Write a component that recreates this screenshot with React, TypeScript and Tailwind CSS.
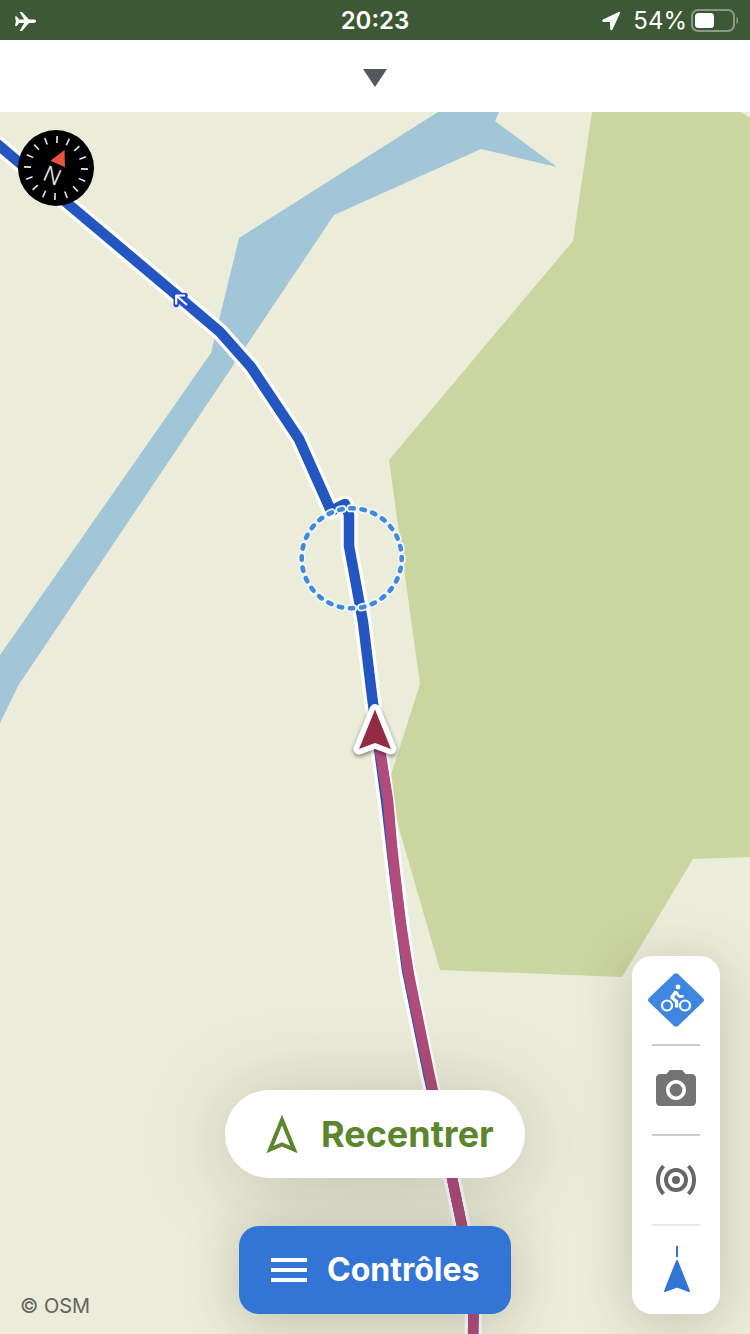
import React from "react";
import { MdCameraAlt } from "react-icons/md";

const route =
  "M-10 138L67 203L180 298L220 332L251 367L299 439L331 511L345 504L349 515L349 546L363 622L372 696L386 800L394 870L401 925L407 970L428 1073L452 1178L462 1226L474 1290L473 1340";
const track =
  "M375 711L380 750L388 800L392 846L398 900L401 925L409 975L429 1073L452 1178L462 1226L474 1290L473 1340";
const ticks = Array.from({ length: 16 }, (_, i) => i * 22.5 + 2);

function MapCanvas() {
  return (
    <svg
      className="absolute inset-0 h-full w-full"
      viewBox="0 112 750 1222"
      preserveAspectRatio="xMidYMid slice"
      aria-hidden="true"
    >
      <rect x="-1000" y="-1000" width="3000" height="4000" fill="#ebecda" />
      <path
        fill="#a2c6d8"
        d="M438 112H499L495 121L557 167L481 149L334 215L18 686L0 723V655L211 353L239 238Z"
      />
      <path
        fill="#cbd59f"
        d="M592 112L573 241L389 460L420 684L390 778L398 825L440 970L622 977L693 859L750 857V118L741 112Z"
      />
      <g fill="none" strokeLinejoin="round">
        <path d={route} stroke="#fff" strokeWidth="17" />
        <path d={route} stroke="#2356c0" strokeWidth="10.5" />
        <path d={track} stroke="#b04b7b" strokeWidth="10.5" />
      </g>

      {/* direction arrow on the route */}
      <g fill="none" strokeLinejoin="round">
        <path
          d="M185 295.500H176.200V304.500M176.200 295.500L187 305"
          stroke="#2448e0"
          strokeWidth="5.500"
          strokeLinecap="round"
        />
        <path d="M185 295.500H176.200V304.500M176.200 295.500L187 305" stroke="#fff" strokeWidth="2.200" />
      </g>

      {/* accuracy circle */}
      <g fill="none" strokeLinecap="round" strokeDasharray="3.4 7.82" strokeDashoffset="1.7">
        <circle cx="351.700" cy="558.300" r="50" stroke="#eef6fa" strokeWidth="8" />
        <circle cx="351.700" cy="558.300" r="50" stroke="#4488d8" strokeWidth="4.600" />
      </g>

      {/* current position */}
      <g style={{ filter: "drop-shadow(0 2px 2px rgba(0,0,0,0.45))" }}>
        <path
          d="M375 709.500L391 749L375 743L359 749Z"
          fill="#fff"
          stroke="#fff"
          strokeWidth="11"
          strokeLinejoin="round"
        />
      </g>
      <path d="M375 709.500L391 749L375 743L359 749Z" fill="#922c42" />
    </svg>
  );
}

function StatusBar() {
  return (
    <header className="grid h-10 grid-cols-3 items-center bg-[#3c5834] px-3 pt-0.5 text-2xl text-white">
      <svg width="24" height="22" viewBox="12 9 24 22" fill="currentColor" aria-label="Mode avion">
        <path d="M15 15.500h1.800L19.200 18.600h5L19.600 11h2.400L29 18.600h4.400c1.800 0 2.900.8 2.900 1.700s-1.100 1.700-2.900 1.700H29L22 30h-2.400l4.600-8h-5L16.800 25H15l.9-4.700z" />
      </svg>
      <span className="text-center font-semibold">20:23</span>
      <div className="flex items-center justify-end">
        <svg className="mr-3" width="20" height="20" viewBox="0 0 20 20" fill="currentColor" aria-hidden="true">
          <path d="M17.600 1L2 8.500C.6 9.200.9 10.900 2.400 10.900L9 11.100 9.200 17.800C9.200 19.400 11 19.600 11.600 18.200L18.900 2.400C19.400 1.200 18.700.5 17.600 1z" />
        </svg>
        <span>54%</span>
        <svg className="ml-1" width="47" height="24" viewBox="0 0 47 24" aria-label="Batterie">
          <rect x="1" y="1" width="42" height="21" rx="6" fill="none" stroke="#fff" strokeOpacity=".4" strokeWidth="2" />
          <rect x="4" y="4" width="19" height="15" rx="3.500" fill="#fff" />
          <path d="M45.500 8c1 .4 1.500 1.800 1.500 3.500s-.5 3.100-1.500 3.500z" fill="#fff" fillOpacity=".45" />
        </svg>
      </div>
    </header>
  );
}

function Compass() {
  return (
    <button aria-label="Boussole" className="size-[76px] rounded-full bg-black">
      <svg width="76" height="76" viewBox="-38 -38 76 76">
        {ticks.map((angle) => (
          <path key={angle} d="M0 -32V-25" stroke="#e8e8e8" strokeWidth="1.600" transform={`rotate(${angle})`} />
        ))}
        <path d="M8.500 -18L-5.500 -7.300L9 -.7Z" fill="#ec5242" />
        <text
          transform="translate(-3.700 7.300) rotate(24)"
          y="8"
          textAnchor="middle"
          fill="#e8e8e8"
          className="text-[22px] font-light"
        >
          N
        </text>
      </svg>
    </button>
  );
}

function Toolbar() {
  return (
    <div className="flex w-22 flex-col items-center rounded-[20px] bg-white shadow-[0_8px_56px_rgba(40,40,20,0.22)]">
      <button aria-label="Vélo" className="flex h-22 w-full items-center justify-center">
        <svg width="56" height="54" viewBox="0 0 56 54">
          <path
            d="M26 .9Q28-.6 30 .9L55 25Q57 27 55 29L30 53.100Q28 54.600 26 53.100L1 29Q-1 27 1 25Z"
            fill="#3f86e0"
          />
          <g fill="none" stroke="#fff" strokeLinejoin="round">
            <circle cx="19" cy="32.500" r="5" strokeWidth="2.200" />
            <circle cx="37" cy="32.500" r="5" strokeWidth="2.200" />
            <path d="M28 18.500L23.800 24.500L28.600 28.500V34.500" strokeWidth="3.400" />
            <path d="M27.500 18.500L31 23.300H35.500" strokeWidth="2.800" />
          </g>
          <circle cx="30" cy="14" r="2.400" fill="#fff" />
        </svg>
      </button>
      <div className="h-0.5 w-12 bg-[#cacaca]" />
      <button aria-label="Photo" className="flex h-22 w-full items-center justify-center text-[#747474]">
        <MdCameraAlt size={48} />
      </button>
      <div className="h-0.5 w-12 bg-[#cacaca]" />
      <button aria-label="Diffusion" className="flex h-22 w-full items-center justify-center">
        <svg width="48" height="48" viewBox="-24 -24 48 48" fill="none" stroke="#666" strokeWidth="4">
          <circle r="4" fill="#666" stroke="none" />
          <circle r="10" />
          <path d="M-12.500 -14A20.500 20.500 0 0 0 -12.500 14M12.500 -14A20.500 20.500 0 0 1 12.500 14" />
        </svg>
      </button>
      <div className="h-0.5 w-12 bg-[#e8e8e8]" />
      <button aria-label="Orientation" className="flex h-22 w-full items-center justify-center">
        <svg width="48" height="48" viewBox="0 0 48 48" fill="#3275d4">
          <path d="M24 0h2v11h-2z" />
          <path d="M25 15L37 45L25 40.500L13 45Z" stroke="#3275d4" strokeWidth="2" strokeLinejoin="round" />
        </svg>
      </button>
    </div>
  );
}

function App() {
  return (
    <div className="flex min-h-screen flex-col font-['Inter',sans-serif]">
      <StatusBar />
      <button aria-label="Déplier" className="flex h-18 items-center justify-center bg-white pt-1">
        <svg width="24" height="18" viewBox="0 0 24 18" fill="#55575b">
          <path d="M0 0H24L12 18Z" />
        </svg>
      </button>

      <main className="relative isolate flex flex-1 flex-col justify-between overflow-hidden">
        <MapCanvas />
        <div className="relative px-[18px] pt-[18px]">
          <Compass />
        </div>

        <div className="relative grid grid-cols-[1fr_auto_1fr] items-end px-5 pb-5">
          <a href="#osm" className="text-xl leading-4 text-[#63645a]">
            © OSM
          </a>
          <div className="flex flex-col items-center gap-12">
            <button className="flex h-22 w-[300px] items-center gap-6 rounded-full bg-white pl-10 text-4xl font-bold text-[#5b862b] shadow-[0_8px_88px_rgba(40,40,20,0.24)]">
              <svg width="32" height="40" viewBox="0 0 32 40" fill="none" stroke="currentColor" strokeWidth="4">
                <path d="M17 6L29 35.500L17 30.500L5 35.500Z" />
              </svg>
              Recentrer
            </button>
            <button className="flex h-22 w-[272px] items-center gap-5 rounded-[20px] bg-[#3275d4] pl-8 text-[32px] font-bold text-white shadow-[0_8px_56px_rgba(40,40,20,0.24)]">
              <svg width="36" height="24" viewBox="0 0 36 24" fill="currentColor">
                <path d="M0 0h36v4H0zM0 10h36v4H0zM0 20h36v4H0z" />
              </svg>
              Contrôles
            </button>
          </div>
          <div className="mr-2.5 justify-self-end">
            <Toolbar />
          </div>
        </div>
      </main>
    </div>
  );
}

export default App;
